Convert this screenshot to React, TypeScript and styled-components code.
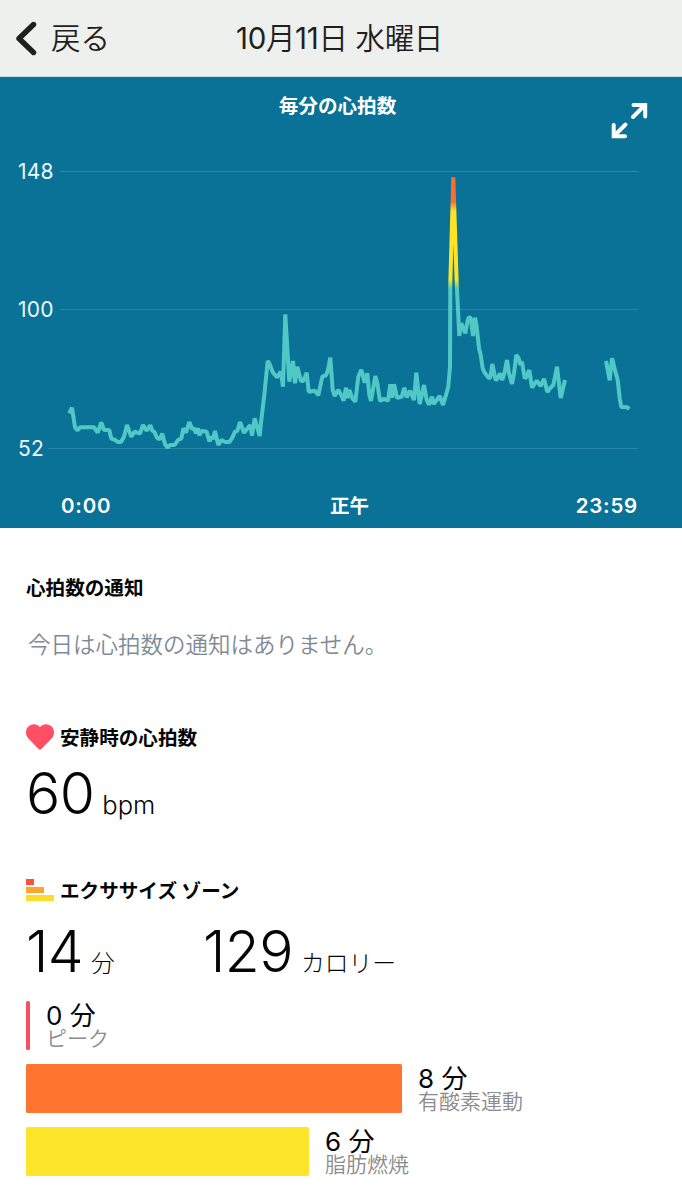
import React from "react";
import styled, { createGlobalStyle } from "styled-components";

const GlobalStyle = createGlobalStyle`
  * { box-sizing: border-box; }
  body {
    margin: 0;
    background: #fff;
    color: #050505;
    font-family: Inter, "Noto Sans CJK JP", sans-serif;
  }
`;

const Screen = styled.div`
  width: 682px;
  height: 1200px;
  overflow: hidden;
  background: #fff;
`;

const Header = styled.header`
  height: 77px;
  display: grid;
  grid-template-columns: 236px 1fr;
  align-items: center;
  background: #eef0ed;
  border-bottom: 1px solid #c9dadf;
  color: #1f1f1f;
`;

const BackButton = styled.button`
  display: flex;
  align-items: center;
  gap: 14px;
  height: 76px;
  padding: 0 0 0 15px;
  border: 0;
  background: none;
  color: inherit;
  font: 350 29.5px/40px Inter, "Noto Sans CJK JP", sans-serif;
`;

const Title = styled.h1`
  margin: 0;
  font-size: 29.5px;
  font-weight: 400;
  line-height: 40px;
  letter-spacing: -0.35px;
  white-space: nowrap;

  span { font-weight: 350; }
`;

const ChartPanel = styled.section`
  height: 451px;
  display: flex;
  flex-direction: column;
  background: #097296;
  color: #fff;
`;

const ChartHeader = styled.div`
  height: 63px;
  display: grid;
  grid-template-columns: 1fr auto 1fr;
  padding: 13px 34px 0 27px;
`;

const ChartTitle = styled.h2`
  margin: 0;
  padding-top: 1px;
  font-size: 19.6px;
  font-weight: 700;
  line-height: 30px;
`;

const ExpandButton = styled.button`
  justify-self: end;
  width: 37px;
  height: 37px;
  margin-top: 12px;
  padding: 0;
  border: 0;
  background: none;
  color: #fff;
`;

const Plot = styled.svg`
  display: block;
  flex: none;
`;

const TickLabel = styled.text`
  fill: #eef7fa;
  font-size: 21px;
  font-weight: 400;
  letter-spacing: 0.2px;
`;

const TimeAxis = styled.div`
  display: grid;
  grid-template-columns: 1fr auto 1fr;
  padding: 0 44px 0 61px;
  margin-top: 14px;
  font-size: 20.5px;
  font-weight: 600;
  line-height: 30px;
  letter-spacing: 0.8px;

  span:nth-child(2) { font-size: 19.5px; letter-spacing: 0; }
  span:last-child { text-align: right; }
`;

const Content = styled.main`
  padding: 44px 26px 0;
`;

const SectionTitle = styled.h2`
  display: flex;
  align-items: center;
  gap: 6px;
  height: 30px;
  margin: 0;
  font-size: 19.6px;
  font-weight: 700;
  line-height: 30px;
  white-space: nowrap;

  span { padding-top: 2px; }
`;

const Notice = styled.p`
  margin: 26px 0 0 2px;
  color: #7f8b93;
  font-size: 22.5px;
  font-weight: 350;
  line-height: 34px;
`;

const Section = styled.section<{ $top: number }>`
  margin-top: ${(p) => p.$top}px;
`;

const Metrics = styled.div<{ $top: number }>`
  display: grid;
  grid-template-columns: 177px 1fr;
  margin-top: ${(p) => p.$top}px;
`;

const Metric = styled.div`
  display: flex;
  align-items: baseline;
  height: 64px;
  line-height: 64px;
  white-space: nowrap;
`;

const Value = styled.span`
  font-size: 57px;
  font-weight: 300;
  letter-spacing: -0.6px;
`;

const Unit = styled.span<{ $size?: number }>`
  margin-left: 8px;
  font-size: ${(p) => p.$size ?? 23.8}px;
  font-weight: 300;
`;

const Zones = styled.div`
  display: flex;
  flex-direction: column;
  gap: 14px;
  margin-top: 17px;
`;

const Zone = styled.div`
  display: flex;
  height: 49px;
`;

const ZoneBar = styled.div<{ $color: string }>`
  height: 49px;
  border-radius: 1.5px;
  background: ${(p) => p.$color};
`;

const ZoneText = styled.div`
  display: flex;
  flex-direction: column;
  margin-left: 16px;
  white-space: nowrap;
`;

const ZoneTime = styled.span`
  height: 26px;
  font-size: 26px;
  font-weight: 400;
  line-height: 29px;
`;

const ZoneName = styled.span`
  font-size: 21px;
  font-weight: 350;
  line-height: 23px;
  color: #8c8c8c;
`;

type Run = { x: number; y: number; points: string };

// Each run is an origin plus samples in thirds of a pixel.
const dayRuns: Run[] = [
  {
    x: 50,
    y: 340,
    points:
      "58,220 66,203 75,262 82,271 90,262 132,262 143,278 154,247 162,270 178,270 184,296 196,300 203,306 213,306 222,290 231,255 244,290 254,275 270,281 279,255 290,272 301,256 307,272 313,275 321,293 329,298 337,281 345,312 353,323 360,315 374,315 384,300 394,296 400,265 408,278 418,246 427,268 433,265 438,280 444,265 448,286 455,273 470,275 478,304 486,290 489,298 495,273 505,315 514,300 526,306 538,306 546,295 555,275 562,273 570,246 582,278 590,268 601,255 606,287 614,235 629,288",
  },
  {
    x: 250,
    y: 300,
    points:
      "34,360 43,285 53,183 58,190 68,217 81,232 92,215 99,260 106,43 118,245 129,183 135,250 142,200 153,243 160,243 170,218 176,275 195,272 205,286 217,230 228,226 234,210 241,173 248,270 254,288 265,270 274,286 281,302 288,263 292,294 298,270 307,295 316,305 325,230 334,209 344,248 352,220 358,285 363,303 376,228 382,250 390,303 402,296 414,302 421,253 426,293 432,253 441,293 455,290 463,263 470,292 480,272 492,300 499,218 509,312 522,255 530,300 537,314 546,290 551,312 569,288 579,315 588,285 595,260",
  },
  {
    x: 430,
    y: 160,
    points:
      "60,620 61,370 70,52 80,370 88,528 94,490 106,520 113,480 118,471 122,475 129,528 135,473 140,500 147,565 152,585 158,625 165,640 177,655 181,652 187,612 197,661 203,655 210,640 217,660 223,640 231,600 237,640 246,672 252,640 259,585 266,595 271,615 276,605 284,655 289,652 298,630 306,683 320,662 332,678 342,656 352,696 360,685 370,675 375,650 381,620 392,714 405,660",
  },
];

const eveningRuns: Run[] = [
  {
    x: 430,
    y: 160,
    points: "528,603 539,661 546,595 555,630 563,660 569,715 574,741 592,742 598,747",
  },
];

const PLOT_TOP = 140;

const toPoints = (runs: Run[]) =>
  runs
    .flatMap((run) =>
      run.points.split(" ").map((pair) => {
        const [px, py] = pair.split(",").map(Number);
        return `${(run.x + px / 3).toFixed(1)},${(run.y + py / 3 - PLOT_TOP).toFixed(1)}`;
      })
    )
    .join(" ");

const ticks = [
  { label: "148", y: 31.5, x: 60 },
  { label: "100", y: 169.5, x: 60 },
  { label: "52", y: 308.5, x: 48 },
];

const zones = [
  { time: "0 分", name: "ピーク", width: 4, color: "#fb4e65" },
  { time: "8 分", name: "有酸素運動", width: 376, color: "#ff752f" },
  { time: "6 分", name: "脂肪燃焼", width: 283, color: "#fde52b" },
];

function HeartRatePlot() {
  return (
    <Plot width="682" height="337" viewBox="0 0 682 337">
      <defs>
        <linearGradient id="intensity" gradientUnits="userSpaceOnUse" x1="0" y1="37" x2="0" y2="310">
          <stop offset="0.09" stopColor="#fb6e2d" />
          <stop offset="0.125" stopColor="#fde326" />
          <stop offset="0.375" stopColor="#fde326" />
          <stop offset="0.41" stopColor="#50c8c6" />
        </linearGradient>
      </defs>
      {ticks.map((t) => (
        <g key={t.label}>
          <line x1={t.x} x2="638" y1={t.y} y2={t.y} stroke="#2c86a6" strokeWidth="1" />
          <TickLabel x="18" y={t.y + 7.5}>{t.label}</TickLabel>
        </g>
      ))}
      {[dayRuns, eveningRuns].map((runs, i) => (
        <polyline
          key={i}
          points={toPoints(runs)}
          fill="none"
          stroke="url(#intensity)"
          strokeWidth="4"
          strokeLinejoin="bevel"
        />
      ))}
    </Plot>
  );
}

export default function App() {
  return (
    <Screen>
      <GlobalStyle />
      <Header>
        <BackButton>
          <svg width="22" height="36" viewBox="0 0 22 36" fill="none">
            <path d="M18.5 4.5 4 18.5 18.5 32.5" stroke="#1f1f1f" strokeWidth="5.4" strokeLinecap="round" strokeLinejoin="round" />
          </svg>
          <span>戻る</span>
        </BackButton>
        <Title>10<span>月</span>11<span>日 水曜日</span></Title>
      </Header>

      <ChartPanel>
        <ChartHeader>
          <span />
          <ChartTitle>毎分の心拍数</ChartTitle>
          <ExpandButton aria-label="拡大">
            <svg width="37" height="37" viewBox="0 0 37 37" fill="none" stroke="currentColor" strokeWidth="4">
              <path d="M22 15 33 4M3 34 14.5 22.5" strokeLinecap="round" />
              <path d="M22.5 3H34.2V14.5M2.7 23V34.2H14" strokeLinecap="round" strokeLinejoin="miter" />
            </svg>
          </ExpandButton>
        </ChartHeader>
        <HeartRatePlot />
        <TimeAxis>
          <span>0:00</span>
          <span>正午</span>
          <span>23:59</span>
        </TimeAxis>
      </ChartPanel>

      <Content>
        <SectionTitle><span>心拍数の通知</span></SectionTitle>
        <Notice>今日は心拍数の通知はありません。</Notice>

        <Section $top={60}>
          <SectionTitle>
            <svg width="28" height="26" viewBox="0 0 28 26">
              <path d="M14 25.7C13 25.700 12.400 24.900 11.600 24.100L2.400 14.500C-.8 11.200-.8 6 2.100 2.800 5.300-.6 10.700-.6 14 3.200 17.300-.6 22.700-.6 25.900 2.800 28.800 6 28.800 11.200 25.600 14.500L16.400 24.100C15.600 24.900 15 25.700 14 25.700Z" fill="#ff4f64" />
            </svg>
            <span>安静時の心拍数</span>
          </SectionTitle>
          <Metrics $top={10}>
            <Metric>
              <Value>60</Value>
              <Unit $size={25.5}>bpm</Unit>
            </Metric>
          </Metrics>
        </Section>

        <Section $top={49}>
          <SectionTitle>
            <svg width="28" height="22" viewBox="0 0 28 22">
              <rect width="8" height="6" fill="#ff5335" />
              <rect y="8" width="18" height="6" fill="#ffa62b" />
              <rect y="16" width="28" height="6" fill="#fddd2b" />
            </svg>
            <span>エクササイズ ゾーン</span>
          </SectionTitle>
          <Metrics $top={15}>
            <Metric>
              <Value>14</Value>
              <Unit>分</Unit>
            </Metric>
            <Metric>
              <Value>129</Value>
              <Unit>カロリー</Unit>
            </Metric>
          </Metrics>
          <Zones>
            {zones.map((z) => (
              <Zone key={z.name}>
                <ZoneBar $color={z.color} style={{ width: z.width }} />
                <ZoneText>
                  <ZoneTime>{z.time}</ZoneTime>
                  <ZoneName>{z.name}</ZoneName>
                </ZoneText>
              </Zone>
            ))}
          </Zones>
        </Section>
      </Content>
    </Screen>
  );
}
